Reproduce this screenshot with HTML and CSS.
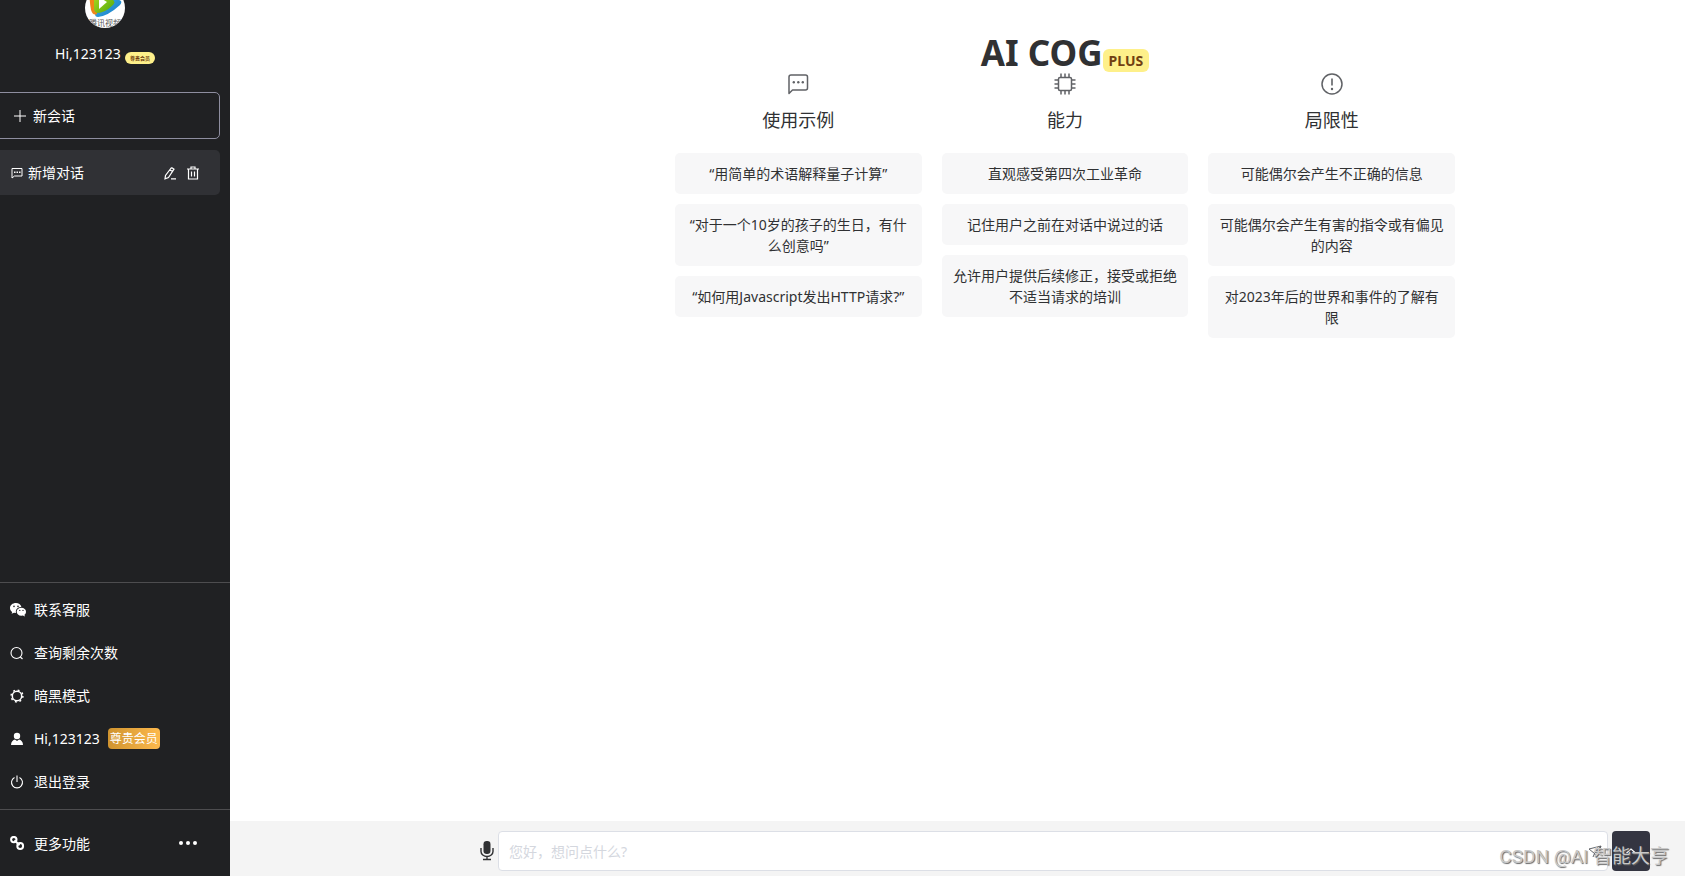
FILE: index.html
```html
<!DOCTYPE html>
<html lang="zh-CN">
<head>
<meta charset="utf-8">
<title>AI COG</title>
<link rel="stylesheet" href="styles.css">
</head>
<body>
<div class="app">
  <aside class="sidebar">
    <div class="profile">
      <svg class="avatar" viewBox="0 0 40 40" role="img" aria-label="头像">
        <defs>
          <clipPath id="disc"><circle cx="20" cy="20" r="20"/></clipPath>
          <linearGradient id="blue" x1="0" y1="0" x2="1" y2="1"><stop offset="0" stop-color="#4cc4f2"/><stop offset="1" stop-color="#1577c4"/></linearGradient>
          <linearGradient id="green" x1="0" y1="0" x2="1" y2="1"><stop offset="0" stop-color="#b4dc1e"/><stop offset="1" stop-color="#4da80f"/></linearGradient>
        </defs>
        <g clip-path="url(#disc)">
          <rect width="40" height="40" fill="#fff"/>
          <path d="M5 3Q18 2 36 13Q37 15 35 17Q23 28 13 29Q10 29 10 26Z" fill="url(#blue)"/>
          <path d="M5 2Q8 0 12 3V26Q8 28 6 22Q4 12 5 2Z" fill="#f08519"/>
          <path d="M9 4Q20 3 29 13Q30 15 28 17Q20 25 12 25Q9 24 9 20Z" fill="url(#green)"/>
          <path d="M14 9L22 14L14 21Z" fill="#fff"/>
          <text x="20" y="38" text-anchor="middle" class="avatar-text">腾讯视频</text>
        </g>
      </svg>
      <div class="profile-name">Hi,123123<span class="tiny-badge">尊贵会员</span></div>
    </div>

    <button class="new-chat" type="button">
      <svg class="icon-12" viewBox="0 0 12 12" aria-hidden="true"><path d="M6 0v12M0 6h12" fill="none" stroke="currentColor"/></svg>
      新会话
    </button>

    <div class="chat-item">
      <svg class="icon-12" viewBox="0 0 24 24" aria-hidden="true"><path d="M2 22V3h20v15H7z" fill="none" stroke="currentColor" stroke-width="2"/><path d="M6 9h3v3H6zM11 9h3v3h-3zM16 9h3v3h-3z" fill="currentColor"/></svg>
      <span class="chat-title">新增对话</span>
      <button class="icon-button" type="button" aria-label="编辑">
        <svg class="icon-14" viewBox="0 0 14 14" aria-hidden="true"><path d="M8.500 1.500L11 3.200L5.500 11.500L2 12.800L2.500 9.500L8.500 1.500M6.800 3.700L9.500 5.600M8 12.800H13" fill="none" stroke="currentColor" stroke-width="1.200"/></svg>
      </button>
      <button class="icon-button" type="button" aria-label="删除">
        <svg class="icon-14" viewBox="0 0 14 14" aria-hidden="true"><path d="M1 3h12M5 3V1h4v2M2.500 3v10h9V3M5.500 5.500v5M8.500 5.500v5" fill="none" stroke="currentColor" stroke-width="1.200"/></svg>
      </button>
    </div>

    <nav class="menu">
      <a class="menu-row" href="#">
        <svg class="icon-menu" viewBox="0 0 16 14" aria-hidden="true"><path fill="currentColor" fill-rule="evenodd" d="M6 0C2.500 0 0 2.200 0 5c0 1.700.8 3 2.200 4L1.600 10.800L4 9.700l2 .3C5.300 6.500 7.500 4 11.400 4C10.800 1.500 8.600 0 6 0zM4 2.600a.8.8 0 1 1 0 1.600.8.8 0 0 1 0-1.600zM8 2.600a.8.8 0 1 1 0 1.600.8.8 0 0 1 0-1.600z"/><path fill="currentColor" fill-rule="evenodd" d="M11.300 4.800C8.700 4.800 6.700 6.500 6.700 8.700s2 4 4.600 4l1.600-.3L15 13.500l-.6-1.800C15.500 11 16 10 16 8.700c0-2.200-2-3.900-4.700-3.900zM9.800 6.800a.6.6 0 1 1 0 1.300.6.6 0 0 1 0-1.300zM13 6.800a.6.6 0 1 1 0 1.300.6.6 0 0 1 0-1.300z"/></svg>
        联系客服
      </a>
      <a class="menu-row" href="#">
        <svg class="icon-menu" viewBox="0 0 16 14" aria-hidden="true"><circle cx="6.500" cy="7" r="5.500" fill="none" stroke="currentColor" stroke-width="1.100"/><path d="M10.300 11L12.500 13" stroke="currentColor" stroke-width="1.200"/></svg>
        查询剩余次数
      </a>
      <a class="menu-row" href="#">
        <svg class="icon-menu" viewBox="0 0 16 14" aria-hidden="true"><circle cx="7" cy="7" r="4.700" fill="none" stroke="currentColor" stroke-width="1.500"/><circle cx="7" cy="7" r="5.900" fill="none" stroke="currentColor" stroke-width="1.500" stroke-dasharray="1.900 2.734"/></svg>
        暗黑模式
      </a>
      <a class="menu-row" href="#">
        <svg class="icon-menu" viewBox="0 0 16 14" aria-hidden="true"><circle cx="7" cy="4" r="3.200" fill="currentColor"/><path d="M1 13C1 9.500 3 8 5 7.500L7 9L9 7.500C11 8 13 9.500 13 13z" fill="currentColor"/></svg>
        Hi,123123<span class="vip">尊贵会员</span>
      </a>
      <a class="menu-row" href="#">
        <svg class="icon-menu" viewBox="0 0 16 14" aria-hidden="true"><path d="M4.500 2.500A5.500 5.500 0 1 0 9.500 2.500M7 .5V7" fill="none" stroke="currentColor" stroke-width="1.100"/></svg>
        退出登录
      </a>
    </nav>

    <div class="more">
      <svg class="icon-menu" viewBox="0 0 16 14" aria-hidden="true"><g fill="none" stroke="currentColor" stroke-width="2"><circle cx="3.800" cy="3.600" r="2.700"/><circle cx="10.200" cy="10" r="2.900"/><path d="M4.500 4.300L9.500 9.300"/></g></svg>
      <span class="chat-title">更多功能</span>
      <button class="icon-button" type="button" aria-label="更多">
        <svg class="dots" viewBox="0 0 18 4" aria-hidden="true"><g fill="currentColor"><circle cx="2" cy="2" r="2"/><circle cx="9" cy="2" r="2"/><circle cx="16" cy="2" r="2"/></g></svg>
      </button>
    </div>
  </aside>

  <main class="main">
    <div class="intro">
      <h1 class="title">AI COG<span class="plus">PLUS</span></h1>
      <div class="columns">
        <section class="column">
          <svg class="icon-22" viewBox="0 0 22 22" aria-hidden="true"><path d="M2 20.500V4Q2 2 4 2H18.500Q20.500 2 20.500 4V15Q20.500 17 18.500 17H5.500Z" fill="none" stroke="currentColor" stroke-width="1.500" stroke-linejoin="round"/><g fill="currentColor"><circle cx="6.800" cy="9.300" r="1.200"/><circle cx="11.300" cy="9.300" r="1.200"/><circle cx="15.800" cy="9.300" r="1.200"/></g></svg>
          <h2 class="heading">使用示例</h2>
          <p class="card">“用简单的术语解释量子计算”</p>
          <p class="card">“对于一个10岁的孩子的生日，有什么创意吗”</p>
          <p class="card">“如何用Javascript发出HTTP请求?”</p>
        </section>
        <section class="column">
          <svg class="icon-22" viewBox="0 0 22 22" aria-hidden="true"><rect x="4.500" y="4.500" width="13" height="13" rx="1.500" fill="none" stroke="currentColor" stroke-width="1.500"/><path d="M7 4V.5M11 4V.5M15 4V.5M7 18v3.500M11 18v3.500M15 18v3.500M4 7H.5M4 11H.5M4 15H.5M18 7h3.500M18 11h3.500M18 15h3.500" fill="none" stroke="currentColor" stroke-width="1.500"/></svg>
          <h2 class="heading">能力</h2>
          <p class="card">直观感受第四次工业革命</p>
          <p class="card">记住用户之前在对话中说过的话</p>
          <p class="card">允许用户提供后续修正，接受或拒绝不适当请求的培训</p>
        </section>
        <section class="column">
          <svg class="icon-22" viewBox="0 0 22 22" aria-hidden="true"><circle cx="11" cy="11" r="10" fill="none" stroke="currentColor" stroke-width="1.500"/><path d="M11 5.500v7" stroke="currentColor" stroke-width="1.600"/><circle cx="11" cy="16" r="1.200" fill="currentColor"/></svg>
          <h2 class="heading">局限性</h2>
          <p class="card">可能偶尔会产生不正确的信息</p>
          <p class="card">可能偶尔会产生有害的指令或有偏见的内容</p>
          <p class="card">对2023年后的世界和事件的了解有限</p>
        </section>
      </div>
    </div>

    <form class="composer">
      <button class="icon-button mic" type="button" aria-label="语音">
        <svg viewBox="0 0 14 20" aria-hidden="true"><rect x="3.500" y="0" width="7" height="13" rx="3.200" fill="currentColor"/><path d="M1 7v3.500a6 5 0 0 0 12 0V7M7 15.500V18M3 18.500h8" fill="none" stroke="currentColor" stroke-width="1.400"/></svg>
      </button>
      <div class="field">
        <input class="prompt" type="text" aria-label="消息" placeholder="您好，想问点什么?">
        <svg class="plane" viewBox="0 0 14 14" aria-hidden="true"><path d="M1 4L13 1L9 13L6.500 8.500zM6.500 8.500L13 1M6.500 8.500L5 12" fill="none" stroke="currentColor"/></svg>
      </div>
      <button class="send" type="button" aria-label="展开">
        <svg class="icon-12" viewBox="0 0 12 12" aria-hidden="true"><path d="M1.500 8L6 4L10.500 8" fill="none" stroke="currentColor" stroke-width="1.200"/></svg>
      </button>
    </form>
  </main>
  <div class="watermark">CSDN @AI 智能大亨</div>
</div>
</body>
</html>
```
FILE: styles.css
```css
* {
  box-sizing: border-box;
}

body {
  margin: 0;
  color: #303133;
  font: 14px/21px "Noto Sans", "Noto Sans CJK SC", sans-serif;
}

h1, h2, p {
  margin: 0;
}

button, input {
  font: inherit;
}

svg {
  display: block;
  flex: none;
}

.app {
  position: relative;
  display: flex;
  height: 100vh;
  overflow: hidden;
}

.sidebar {
  display: flex;
  flex: none;
  flex-direction: column;
  width: 230px;
  overflow: hidden;
  background: #202123;
  color: #fff;
}

.profile {
  display: flex;
  flex-direction: column;
  align-items: center;
  gap: 15px;
  margin: -12px 20px 28px 0;
}

.avatar {
  width: 40px;
  height: 40px;
}

.avatar-text {
  fill: #555;
  font-size: 8px;
}

.profile-name {
  display: flex;
  align-items: flex-end;
  gap: 4px;
}

.tiny-badge {
  padding: 0 5px;
  border-radius: 6px;
  background: #fef08a;
  color: #713f12;
  font-size: 5px;
  font-weight: 700;
  line-height: 12px;
}

.icon-12 {
  width: 12px;
  height: 12px;
}

.icon-14 {
  width: 14px;
  height: 14px;
}

.icon-22 {
  width: 22px;
  height: 22px;
  color: #606266;
}

.icon-menu {
  width: 16px;
  height: 14px;
}

.dots {
  width: 18px;
  height: 4px;
}

.icon-button {
  display: flex;
  padding: 0;
  border: 0;
  background: none;
  color: inherit;
}

.new-chat {
  display: flex;
  align-items: center;
  gap: 7px;
  height: 47px;
  margin: 0 10px 11px -10px;
  padding: 0 23px;
  border: 1px solid #8e8ea0;
  border-radius: 5px;
  background: none;
  color: #fff;
}

.chat-item {
  display: flex;
  align-items: center;
  gap: 9px;
  height: 45px;
  margin: 0 10px 0 -10px;
  padding: 0 20px 0 21px;
  border-radius: 5px;
  background: #303135;
}

.chat-item > .icon-12 {
  margin-right: -4px;
}

.chat-title {
  flex: 1;
}

.menu {
  margin-top: auto;
  padding: 5px 0 6px;
  border: solid #4d4d4f;
  border-width: 1px 0;
}

.menu-row {
  display: flex;
  align-items: center;
  gap: 8px;
  height: 43px;
  padding-left: 10px;
  color: #fff;
  text-decoration: none;
}

.vip {
  padding: 0 2px;
  border-radius: 4px;
  background: linear-gradient(90deg, #d0942f, #fdb94d);
  font-size: 12px;
}

.more {
  display: flex;
  align-items: center;
  gap: 8px;
  height: 66px;
  padding: 0 33px 0 10px;
}

.main {
  display: flex;
  flex: 1;
  flex-direction: column;
  min-width: 0;
}

.intro {
  flex: 1;
  padding: 34px 0 0 215px;
}

.title {
  display: flex;
  align-items: flex-end;
  justify-content: center;
  margin-bottom: 1px;
  font-size: 35px;
  line-height: 38px;
}

.plus {
  padding: 1px 6px;
  border-radius: 6px;
  background: #fef08a;
  color: #713f12;
  font-size: 14px;
  line-height: 21px;
}

.columns {
  display: grid;
  grid-template-columns: repeat(3, 1fr);
  gap: 20px;
  max-width: 780px;
  margin: 0 auto;
}

.column {
  display: flex;
  flex-direction: column;
  gap: 10px;
}

.column .icon-22 {
  align-self: center;
}

.heading {
  margin: 2px 0 9px;
  font-size: 18px;
  font-weight: 400;
  line-height: 27px;
  text-align: center;
}

.card {
  padding: 10px;
  border-radius: 5px;
  background: #f7f7f8;
  text-align: center;
}

.composer {
  display: flex;
  align-items: center;
  gap: 4px;
  padding: 10px 35px 5px 250px;
  background: #f4f4f4;
}

.mic {
  width: 14px;
}

.mic svg {
  width: 14px;
  height: 20px;
}

.field {
  position: relative;
  flex: 1;
}

.prompt {
  display: block;
  width: 100%;
  height: 40px;
  padding: 0 10px;
  border: 1px solid #dcdfe6;
  border-radius: 4px;
  background: #fff;
  color: #303133;
}

.prompt::placeholder {
  color: #d4d7de;
  opacity: 1;
}

.plane {
  position: absolute;
  top: 14px;
  right: 6px;
  width: 14px;
  height: 14px;
  color: #606266;
}

.send {
  display: flex;
  align-items: center;
  justify-content: center;
  width: 38px;
  height: 40px;
  padding: 0;
  border: 0;
  border-radius: 4px;
  background: #343541;
  color: #fff;
}

.watermark {
  position: absolute;
  right: 16px;
  bottom: 6px;
  color: #c8c8c8;
  font: 19px/26px Roboto, "Noto Sans CJK SC", sans-serif;
  text-shadow: 1px 1px 1px #666;
  pointer-events: none;
}
```
